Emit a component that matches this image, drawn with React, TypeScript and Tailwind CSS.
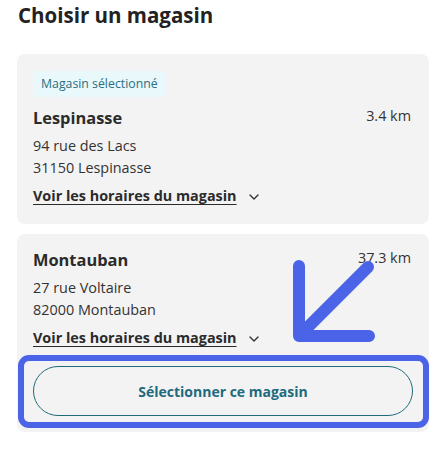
function Chevron() {
  return (
    <svg width="10" height="6" viewBox="0 0 10 6" className="ml-[12px] mt-[2px]">
      <polyline points="1,1 5,5 9,1" fill="none" stroke="#333" strokeWidth="1.4" strokeLinecap="round" strokeLinejoin="round" />
    </svg>
  )
}

function HoursLink() {
  return (
    <div className="flex items-center mt-[6px]">
      <span className="text-[14.4px] leading-[22px] font-bold text-[#2b2b2b] underline underline-offset-[3px]">
        Voir les horaires du magasin
      </span>
      <Chevron />
    </div>
  )
}

function StoreInfo({ name, distance, street, city }: { name: string; distance: string; street: string; city: string }) {
  return (
    <>
      <div className="flex justify-between items-start">
        <span className="text-[16.4px] leading-[24px] font-bold text-[#2b2b2b]">{name}</span>
        <span className="text-[14.4px] leading-[20px] text-[#333] pr-[2px]">{distance}</span>
      </div>
      <div className="mt-[5px] text-[14.4px] leading-[22px] text-[#333]">
        <p>{street}</p>
        <p>{city}</p>
      </div>
      <HoursLink />
    </>
  )
}

export default function App() {
  return (
    <div className="relative w-[446px] h-[464px] bg-white font-['Open_Sans',sans-serif]">
      <h2 className="pl-[18px] pt-[1px] text-[20.5px] leading-[28px] font-bold text-[#222]">
        Choisir un magasin
      </h2>

      <div className="mx-[17px] mt-[25px] flex flex-col gap-[10px]">
        <div className="bg-[#f3f3f3] rounded-lg px-4 pt-4 pb-[17px]">
          <span className="inline-block bg-[#e9f8fb] text-[#2c6e80] text-[12.3px] leading-[26px] px-2 rounded">
            Magasin sélectionné
          </span>
          <div className="mt-[9px]">
            <StoreInfo name="Lespinasse" distance="3.4 km" street="94 rue des Lacs" city="31150 Lespinasse" />
          </div>
        </div>

        <div className="bg-[#f3f3f3] rounded-lg px-4 pt-[14px] pb-4">
          <StoreInfo name="Montauban" distance="37.3 km" street="27 rue Voltaire" city="82000 Montauban" />
          <div className="relative mt-[17px]">
            <div className="absolute -top-[11px] -bottom-[12px] -left-[15px] -right-[16px] border-[6px] border-[#4b63e6] rounded-[11px]" />
            <button className="relative w-full h-[50px] rounded-full border-[1.5px] border-[#1f6b7a] text-[14px] font-bold text-[#1e6a7f]">
              Sélectionner ce magasin
            </button>
          </div>
        </div>
      </div>

      <svg className="absolute left-0 top-0 pointer-events-none" width="446" height="464" viewBox="0 0 446 464">
        <g fill="none" stroke="#4b63e6" strokeWidth="12" strokeLinecap="round" strokeLinejoin="round">
          <polyline points="299,266 299,336 369,336" />
          <line x1="302" y1="333" x2="368" y2="267" />
        </g>
      </svg>
    </div>
  )
}
